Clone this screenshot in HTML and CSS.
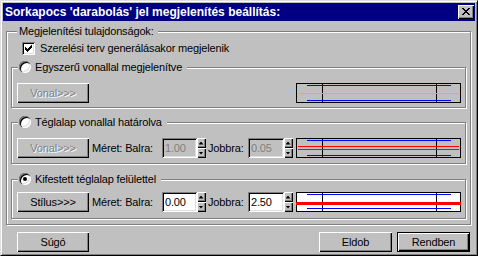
FILE: index.html
```html
<!DOCTYPE html>
<html lang="hu">
<head>
<meta charset="utf-8">
<title>Sorkapocs 'darabolás' jel megjelenítés beállítás</title>
<link rel="stylesheet" href="styles.css">
</head>
<body>
<div class="window">
  <div class="titlebar">
    <span class="title">Sorkapocs 'darabolás' jel megjelenítés beállítás:</span>
    <span class="close"><svg width="16" height="14" viewBox="0 0 16 14" shape-rendering="crispEdges"><path fill="#000" d="M4 3h2v1h-2z M10 3h2v1h-2z M5 4h2v1h-2z M9 4h2v1h-2z M6 5h4v1h-4z M7 6h2v1h-2z M6 7h4v1h-4z M5 8h2v1h-2z M9 8h2v1h-2z M4 9h2v1h-2z M10 9h2v1h-2z"/></svg></span>
  </div>
  <div class="content">
    <div class="group outer">
      <div class="group-title outer-title">Megjelenítési tulajdonságok:</div>
      <div class="check-row">
        <span class="checkbox"><svg width="13" height="13" viewBox="0 0 13 13" shape-rendering="crispEdges"><path fill="#000" d="M9 3h1v3h-1z M8 4h1v3h-1z M7 5h1v3h-1z M6 6h1v3h-1z M5 7h1v3h-1z M4 6h1v3h-1z M3 5h1v3h-1z"/></svg></span>
        <span>Szerelési terv generálásakor megjelenik</span>
      </div>

      <div class="group sub g1">
        <div class="group-title sub-title"><span class="radio"></span><span>Egyszerű vonallal megjelenítve</span></div>
        <div class="row row-simple">
          <span class="btn disabled">Vonal&gt;&gt;&gt;</span>
          <svg class="preview" width="165" height="20" viewBox="0 0 165 20" shape-rendering="crispEdges">
            <rect x="0.5" y="0.5" width="164" height="19" fill="#c0c0c0" stroke="#000"/>
            <path d="M26.5 0V20M140.5 0V20" stroke="#000"/>
            <path d="M11 2.5H155M11 17.5H155" stroke="#0000ff"/>
            <path d="M2 10.5H163" stroke="#00ffff"/>
          </svg>
        </div>
      </div>

      <div class="group sub g2">
        <div class="group-title sub-title"><span class="radio"></span><span>Téglalap vonallal határolva</span></div>
        <div class="row">
          <span class="btn disabled">Vonal&gt;&gt;&gt;</span>
          <span class="lbl lbl-left">Méret: Balra:</span>
          <span class="field field-left disabled">1.00</span>
          <span class="spin"><span class="spin-btn up"></span><span class="spin-btn down"></span></span>
          <span class="lbl lbl-right">Jobbra:</span>
          <span class="field field-right disabled">0.05</span>
          <span class="spin"><span class="spin-btn up"></span><span class="spin-btn down"></span></span>
          <svg class="preview" width="165" height="20" viewBox="0 0 165 20" shape-rendering="crispEdges">
            <rect x="0.5" y="0.5" width="164" height="19" fill="#c0c0c0" stroke="#000"/>
            <path d="M26.5 0V20M140.5 0V20" stroke="#000"/>
            <path d="M11 2.5H155M11 17.5H155" stroke="#0000ff"/>
            <path d="M2 8.5H163M2 11.5H163" stroke="#ff0000"/>
          </svg>
        </div>
      </div>

      <div class="group sub g3">
        <div class="group-title sub-title"><span class="radio checked"></span><span>Kifestett téglalap felülettel</span></div>
        <div class="row">
          <span class="btn">Stílus&gt;&gt;&gt;</span>
          <span class="lbl lbl-left">Méret: Balra:</span>
          <span class="field field-left">0.00</span>
          <span class="spin"><span class="spin-btn up"></span><span class="spin-btn down"></span></span>
          <span class="lbl lbl-right">Jobbra:</span>
          <span class="field field-right">2.50</span>
          <span class="spin"><span class="spin-btn up"></span><span class="spin-btn down"></span></span>
          <svg class="preview" width="165" height="20" viewBox="0 0 165 20" shape-rendering="crispEdges">
            <rect x="0.5" y="0.5" width="164" height="19" fill="#ffffff" stroke="#000"/>
            <path d="M26.5 0V20M140.5 0V20" stroke="#000"/>
            <path d="M11 2.5H155M11 16.5H155" stroke="#0000ff"/>
            <rect x="0" y="10" width="165" height="3" fill="#ff0000"/>
          </svg>
        </div>
      </div>
    </div>

    <div class="footer">
      <span class="btn">Súgó</span>
      <span class="spacer"></span>
      <span class="btn wide">Eldob</span>
      <span class="btn wide default">Rendben</span>
    </div>
  </div>
</div>
</body>
</html>
```
FILE: styles.css
```css
* { box-sizing: border-box; }

html, body {
  margin: 0;
  padding: 0;
}

body {
  width: 478px;
  height: 256px;
  overflow: hidden;
  background: #c0c0c0;
  color: #000;
  font-family: "Liberation Sans", Arial, sans-serif;
  font-size: 11px;
  letter-spacing: -0.15px;
  line-height: 13px;
}

.window {
  width: 478px;
  height: 256px;
  background: #c0c0c0;
  border: 1px solid;
  border-color: #dfdfdf #000 #000 #dfdfdf;
  box-shadow: inset 1px 1px #fff, inset -1px -1px #808080;
  padding: 2px;
  display: flex;
  flex-direction: column;
}

.titlebar {
  height: 18px;
  flex: none;
  background: #000080;
  color: #fff;
  font-weight: bold;
  font-size: 12px;
  letter-spacing: 0;
  display: flex;
  align-items: center;
  justify-content: space-between;
  padding: 0 1px 0 2px;
}

.close {
  width: 16px;
  height: 14px;
  display: block;
  background: #c0c0c0;
  box-shadow: inset 1px 1px #fff, inset -1px -1px #000, inset -2px -2px #808080;
}
.close svg { display: block; }

.content {
  flex: 1;
  display: flex;
  flex-direction: column;
}

/* etched group boxes */
.group {
  border: 1px solid #808080;
  box-shadow: inset 1px 1px #fff, 1px 1px #fff;
  display: flex;
  flex-direction: column;
}

.group-title {
  align-self: flex-start;
  background: #c0c0c0;
  display: flex;
  align-items: center;
}

.outer {
  width: 465px;
  margin: 10px 0 0 3px;
  padding: 0 4px 5px 4px;
}

.outer-title {
  height: 13px;
  margin: -7px 0 0 6px;
  padding: 0 4px 0 2px;
}

.check-row {
  display: flex;
  align-items: center;
  gap: 5px;
  height: 13px;
  margin: 4px 0 0 11px;
}

.checkbox {
  width: 13px;
  height: 13px;
  background: #fff;
  box-shadow: inset 1px 1px #808080, inset -1px -1px #fff, inset 2px 2px #000, inset -2px -2px #dfdfdf;
}
.checkbox svg { display: block; }

.sub {
  width: 455px;
  padding: 0 4px 0 5px;
}

.g1 { margin-top: 12px; padding-bottom: 4px; }
.g2 { margin-top: 14px; padding-bottom: 5px; }
.g3 { margin-top: 15px; padding-bottom: 6px; }

.sub-title {
  height: 12px;
  margin: -7px 0 0 1px;
  padding: 0 5px 0 1px;
  gap: 4px;
}

.radio {
  width: 12px;
  height: 12px;
  border-radius: 50%;
  background: #fff;
  box-shadow: inset 1px 1px 0 #808080, inset 2px 2px 0 #000, inset -1px -1px 0 #fff, inset -2px -2px 0 #dfdfdf;
  display: flex;
  align-items: center;
  justify-content: center;
}
.radio.checked::after {
  content: "";
  width: 4px;
  height: 4px;
  border-radius: 50%;
  background: #000;
}

.row {
  display: flex;
  align-items: center;
  height: 20px;
}
.g1 .row, .g2 .row { margin-top: 10px; }
.g3 .row { margin-top: 7px; }

.row-simple { justify-content: space-between; }

.btn {
  width: 72px;
  height: 20px;
  flex: none;
  display: flex;
  align-items: center;
  justify-content: center;
  background: #c0c0c0;
  box-shadow: inset 1px 1px #fff, inset -1px -1px #000, inset -2px -2px #808080;
}
.btn.disabled {
  color: #808080;
  text-shadow: 1px 1px 0 #fff;
}
.btn.wide { width: 73px; }
.btn.default {
  border: 1px solid #000;
  box-shadow: inset 1px 1px #fff, inset -1px -1px #000, inset -2px -2px #808080;
}

.lbl { flex: none; white-space: nowrap; }
.lbl-left { width: 70px; margin-left: 3px; }
.lbl-right { width: 42px; padding-left: 2px; }

.field {
  height: 20px;
  flex: none;
  display: flex;
  align-items: center;
  padding-left: 3px;
  background: #fff;
  box-shadow: inset 1px 1px #808080, inset -1px -1px #fff, inset 2px 2px #000, inset -2px -2px #dfdfdf;
}
.field.disabled {
  background: #c0c0c0;
  color: #808080;
}
.field-left { width: 35px; }
.field-right { width: 36px; }

.spin {
  width: 9px;
  height: 20px;
  flex: none;
  display: flex;
  flex-direction: column;
}
.spin-btn {
  flex: 1;
  display: flex;
  align-items: center;
  justify-content: center;
  background: #c0c0c0;
  box-shadow: inset 1px 1px #fff, inset -1px -1px #000, inset -2px -2px #808080;
}
.spin-btn::before {
  content: "";
  width: 5px;
  height: 3px;
  background: #000;
}
.spin-btn.up::before { clip-path: polygon(50% 0, 100% 100%, 0 100%); margin: 0 1px 0 0; }
.spin-btn.down::before { clip-path: polygon(0 0, 100% 0, 50% 100%); margin: 0 1px 0 0; }

.preview {
  display: block;
  flex: none;
}
.row .preview { margin-left: auto; }

.footer {
  display: flex;
  align-items: center;
  gap: 5px;
  margin-top: 7px;
  padding: 0 5px 0 14px;
}
.spacer { flex: 1; }
```
